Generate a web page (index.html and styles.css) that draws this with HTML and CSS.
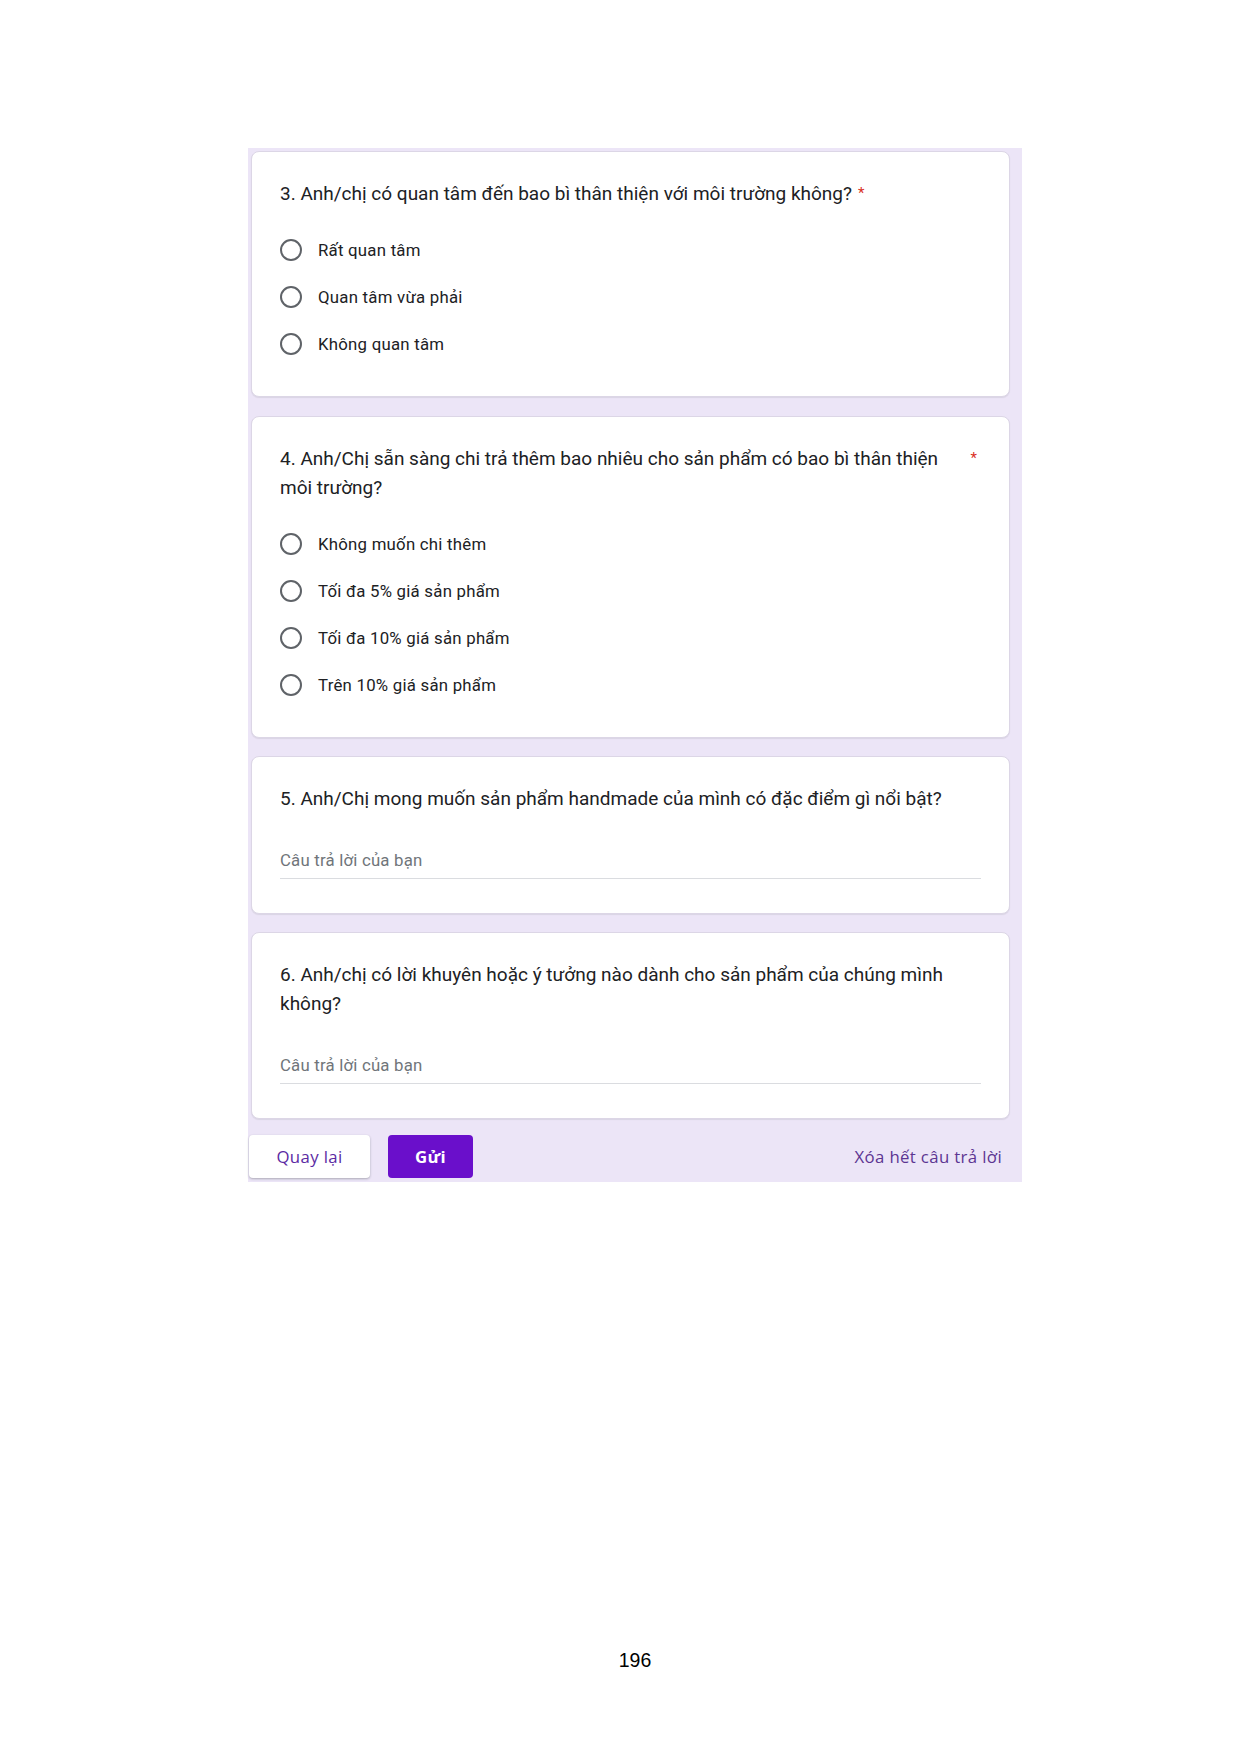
FILE: index.html
```html
<!DOCTYPE html>
<html lang="vi">
<head>
<meta charset="utf-8">
<title>Biểu mẫu</title>
<link rel="stylesheet" href="styles.css">
</head>
<body>
<div class="page">
  <div class="form">
    <section class="card card-choice">
      <div class="title"><span class="title-text">3. Anh/chị có quan tâm đến bao bì thân thiện với môi trường không?</span><span class="star">*</span></div>
      <div class="options">
        <div class="option"><span class="radio"></span><span class="label">Rất quan tâm</span></div>
        <div class="option"><span class="radio"></span><span class="label">Quan tâm vừa phải</span></div>
        <div class="option"><span class="radio"></span><span class="label">Không quan tâm</span></div>
      </div>
    </section>
    <section class="card card-choice">
      <div class="title"><span class="title-text">4. Anh/Chị sẵn sàng chi trả thêm bao nhiêu cho sản phẩm có bao bì thân thiện môi trường?</span><span class="star">*</span></div>
      <div class="options">
        <div class="option"><span class="radio"></span><span class="label">Không muốn chi thêm</span></div>
        <div class="option"><span class="radio"></span><span class="label">Tối đa 5% giá sản phẩm</span></div>
        <div class="option"><span class="radio"></span><span class="label">Tối đa 10% giá sản phẩm</span></div>
        <div class="option"><span class="radio"></span><span class="label">Trên 10% giá sản phẩm</span></div>
      </div>
    </section>
    <section class="card card-text">
      <div class="title"><span class="title-text">5. Anh/Chị mong muốn sản phẩm handmade của mình có đặc điểm gì nổi bật?</span></div>
      <div class="answer">Câu trả lời của bạn</div>
    </section>
    <section class="card card-text">
      <div class="title"><span class="title-text">6. Anh/chị có lời khuyên hoặc ý tưởng nào dành cho sản phẩm của chúng mình không?</span></div>
      <div class="answer">Câu trả lời của bạn</div>
    </section>
    <div class="footer">
      <div class="nav">
        <button class="btn btn-back" type="button">Quay lại</button>
        <button class="btn btn-submit" type="button">Gửi</button>
      </div>
      <span class="clear">Xóa hết câu trả lời</span>
    </div>
  </div>
  <div class="pagenum">196</div>
</div>
</body>
</html>
```

FILE: styles.css
```css
html, body {
  margin: 0;
  padding: 0;
  background: #ffffff;
}

.page {
  width: 1241px;
  min-height: 1754px;
  padding-top: 148px;
  box-sizing: border-box;
}

.form {
  margin-left: 248px;
  width: 774px;
  box-sizing: border-box;
  background: #ece5f7;
  padding: 3px 12px 4px 1px;
  display: flex;
  flex-direction: column;
  gap: 18px;
}

.card {
  margin-left: 2px;
  background: #ffffff;
  border: 1px solid #dcd6e6;
  border-radius: 8px;
  padding: 27px 28px 29px 28px;
  box-shadow: 0 1px 1px rgba(60, 64, 67, 0.10);
  font-family: Roboto, "Noto Sans", Arial, sans-serif;
  color: #202124;
}

.form > .card:first-child + .card {
  margin-top: 1px;
}

.card-text {
  padding-bottom: 34px;
}

.title {
  display: flex;
  align-items: flex-start;
  font-size: 19px;
  line-height: 29px;
  color: #202124;
}

.title-text {
  flex: 0 1 auto;
}

.star {
  color: #d93025;
  font-size: 15px;
  margin-left: 6px;
  margin-right: 4px;
  line-height: 29px;
}

.options {
  margin-top: 18px;
  display: flex;
  flex-direction: column;
}

.option {
  height: 47px;
  display: flex;
  align-items: center;
}

.radio {
  width: 22px;
  height: 22px;
  box-sizing: border-box;
  border: 2px solid #5f6368;
  border-radius: 50%;
  margin-right: 16px;
  flex: none;
}

.label {
  font-size: 16.8px;
  letter-spacing: 0.24px;
  color: #202124;
}

.answer {
  margin-top: 35px;
  font-size: 16.8px;
  letter-spacing: 0.2px;
  line-height: 24px;
  color: #70757a;
  padding-bottom: 6px;
  border-bottom: 1px solid #dadce0;
}

.footer {
  margin-top: -2px;
  display: flex;
  align-items: center;
  justify-content: space-between;
  padding-right: 8px;
}

.nav {
  display: flex;
  gap: 18px;
}

.btn {
  height: 43px;
  border: none;
  border-radius: 4px;
  font-family: "Open Sans", Roboto, Arial, sans-serif;
  font-size: 16.8px;
  letter-spacing: 0.35px;
  padding: 0;
  cursor: pointer;
}

.btn-back {
  width: 121px;
  background: #ffffff;
  color: #5b2aa3;
  font-weight: 500;
  box-shadow: 0 1px 2px rgba(60, 64, 67, 0.25), 0 1px 3px rgba(60, 64, 67, 0.12);
}

.btn-submit {
  width: 85px;
  background: #6a0fcb;
  color: #ffffff;
  font-weight: 700;
}

.clear {
  font-family: "Open Sans", Roboto, Arial, sans-serif;
  font-size: 16.8px;
  letter-spacing: 0.35px;
  font-weight: 500;
  color: #5c3592;
}

.pagenum {
  margin-top: 467px;
  margin-left: 585px;
  width: 100px;
  text-align: center;
  font-family: "Liberation Sans", Arial, sans-serif;
  font-size: 19.5px;
  line-height: 22px;
  color: #000000;
}
```
